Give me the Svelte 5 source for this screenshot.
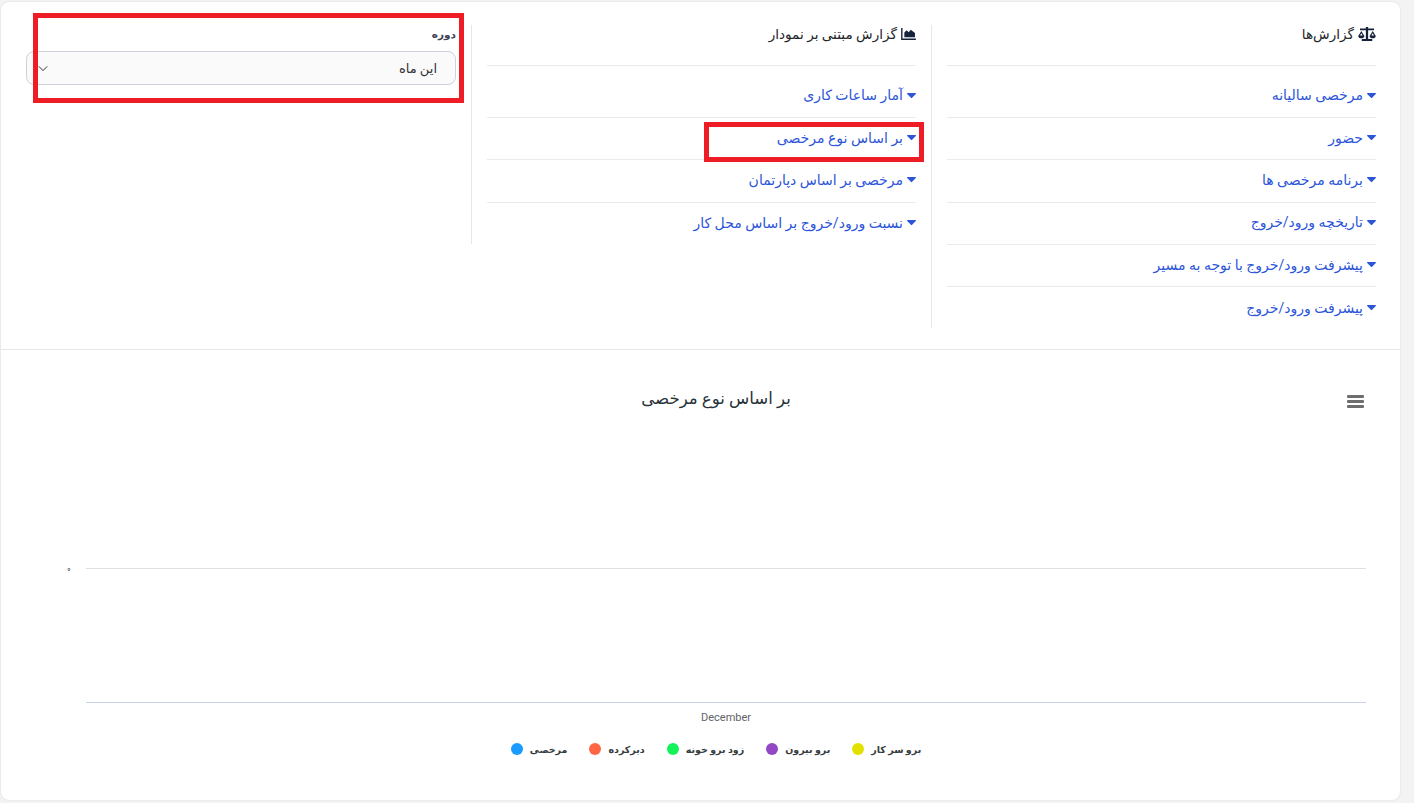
<script>
  const reports = ['مرخصی سالیانه', 'حضور', 'برنامه مرخصی ها', 'تاریخچه ورود/خروج', 'پیشرفت ورود/خروج با توجه به مسیر', 'پیشرفت ورود/خروج'];
  const chartReports = ['آمار ساعات کاری', 'بر اساس نوع مرخصی', 'مرخصی بر اساس دپارتمان', 'نسبت ورود/خروج بر اساس محل کار'];
  const legend = [
    { label: 'مرخصی', color: '#1a9bff' },
    { label: 'دیرکرده', color: '#ff6744' },
    { label: 'زود برو خونه', color: '#14f25a' },
    { label: 'برو بیرون', color: '#9247c4' },
    { label: 'برو سر کار', color: '#e2e000' }
  ];
</script>

{#snippet caret()}
  <svg class="caret" viewBox="0 0 10 6" width="9" height="5.400"><path d="M0.6 0h8.8c.5 0 .8.6.4 1L5.400 5.500c-.2.3-.6.3-.8 0L.2 1C-.2.6.1 0 .6 0z" /></svg>
{/snippet}

<div class="page">
  <div class="card">
    <div class="top" dir="rtl">
      <section class="col col-tall">
        <h3>
          <svg class="head-icon" viewBox="0 0 20 16" width="18" height="14"><path d="M8.700 0h2.600v1.800H18v2h-6.700V13.600H16V16H4v-2.400h4.700V3.800H2v-2h6.700z" /><path d="M3.500 4.500 0 10.200c0 1.800 1.600 2.700 3.500 2.700S7 12 7 10.200zM3.500 7 5 9.800H2zM16.500 4.500 13 10.200c0 1.800 1.600 2.700 3.500 2.700s3.500-.9 3.500-2.700zM16.500 7 18 9.800h-3z" /></svg>
          <span>گزارش‌ها</span>
        </h3>
        <ul>
          {#each reports as item}
            <li>{@render caret()}<a href="#top">{item}</a></li>
          {/each}
        </ul>
      </section>

      <section class="col col-short">
        <h3>
          <svg class="head-icon" viewBox="0 0 16 13" width="15" height="12"><path d="M0 0h1.500v11.400H16V13H0z" /><path d="M3.500 10V5l2.500-2.500 2.200 2L10.500 2 15 5.500V10z" /></svg>
          <span>گزارش مبتنی بر نمودار</span>
        </h3>
        <ul>
          {#each chartReports as item}
            <li>{@render caret()}<a href="#top">{item}</a></li>
          {/each}
        </ul>
      </section>

      <section class="col period">
        <span class="field-label">دوره</span>
        <div class="select">
          <span>این ماه</span>
          <svg viewBox="0 0 12 8" width="10" height="7"><path d="M1 1.500 6 6.500 11 1.500" fill="none" stroke="#333" stroke-width="1.200" /></svg>
        </div>
      </section>
    </div>

    <div class="chart">
      <div class="chart-head">
        <div class="chart-title">بر اساس نوع مرخصی</div>
        <div class="burger"><i></i><i></i><i></i></div>
      </div>
      <div class="plot">
        <span class="tick">°</span>
        <div class="grid-line"></div>
      </div>
      <div class="axis"></div>
      <div class="month">December</div>
      <div class="legend" dir="ltr">
        {#each legend as item}
          <div class="legend-item"><b style="background: {item.color}"></b><span>{item.label}</span></div>
        {/each}
      </div>
    </div>

    <div class="mark mark-period"></div>
    <div class="mark mark-row"></div>
  </div>
</div>

<style>
  :global(body) { background: #f3f3f4; font-family: Roboto, "DejaVu Sans", sans-serif; }
  .page { padding: 2px 14px 0 1px; height: 801px; box-sizing: border-box; overflow: hidden; }
  .card { position: relative; background: #fff; border-radius: 8px; height: 798px; box-shadow: 0 0 2px rgba(0, 0, 0, 0.12); }
  .top { display: flex; padding: 23px 9px 0 10px; height: 324px; border-bottom: 1px solid #e4e6ea; }
  .col { width: 460px; box-sizing: border-box; padding: 0 15px; }
  .col-tall { height: 303px; border-left: 1px solid #e4e6ea; }
  .col-short { height: 219px; border-left: 1px solid #e4e6ea; }
  h3 { display: flex; align-items: center; gap: 4px; margin: 0 0 9.500px; height: 41px; padding-bottom: 22px; box-sizing: border-box; font-size: 13.600px; font-weight: 400; color: #212529; border-bottom: 1px solid #ebebeb; }
  .head-icon { fill: #16213a; }
  ul { list-style: none; margin: 0; padding: 0; }
  li { display: flex; align-items: center; gap: 4px; height: 42.400px; box-sizing: border-box; padding-bottom: 2px; border-bottom: 1px solid #ebebeb; font-size: 14px; }
  li:last-child { border-bottom: 0; }
  li a { color: #2c55d8; text-decoration: none; }
  .caret { fill: #2c55d8; flex: none; }
  .period { padding: 0 15px; }
  .field-label { display: block; font-size: 10.500px; font-weight: 700; color: #3f4254; margin: 3px 0 10px; }
  .select { display: flex; justify-content: space-between; align-items: center; height: 32px; padding: 0 18px 0 11px; background: #fafafa; border: 1px solid #cfd1da; border-radius: 8px; font-size: 13px; color: #333; }
  .chart { padding: 0 34px 0 0; position: relative; }
  .chart-head { position: relative; height: 100px; }
  .chart-title { position: absolute; left: 0; top: 39px; padding-left: 32px; width: 1398px; text-align: center; font-size: 16.600px; color: #263238; box-sizing: border-box; }
  .burger { position: absolute; right: 2px; top: 45px; display: flex; flex-direction: column; gap: 2px; }
  .burger i { display: block; width: 17px; height: 3px; background: #6e6e6e; border-radius: 1px; }
  .plot { position: relative; height: 134px; margin-left: 85px; margin-top: 118px; }
  .tick { position: absolute; left: -19px; top: -1px; font-size: 10px; color: #444; }
  .grid-line { height: 1px; background: #e0e0e0; }
  .axis { height: 1px; background: #c5d2ea; margin-left: 85px; }
  .month { margin-left: 85px; text-align: center; font-size: 11px; color: #5f6368; margin-top: 8px; }
  .legend { display: flex; justify-content: center; gap: 22px; margin-top: 20px; padding-left: 65px; }
  .legend-item { display: flex; align-items: center; gap: 7px; font-size: 9.500px; font-weight: 700; color: #373d3f; }
  .legend-item b { width: 12px; height: 12px; border-radius: 50%; margin-top: -2px; }
  .mark { position: absolute; border: 5px solid #ee1c25; box-sizing: border-box; pointer-events: none; }
  .mark-period { left: 32px; top: 11px; width: 431px; height: 90px; }
  .mark-row { left: 703px; top: 120px; width: 220px; height: 40px; }
</style>
